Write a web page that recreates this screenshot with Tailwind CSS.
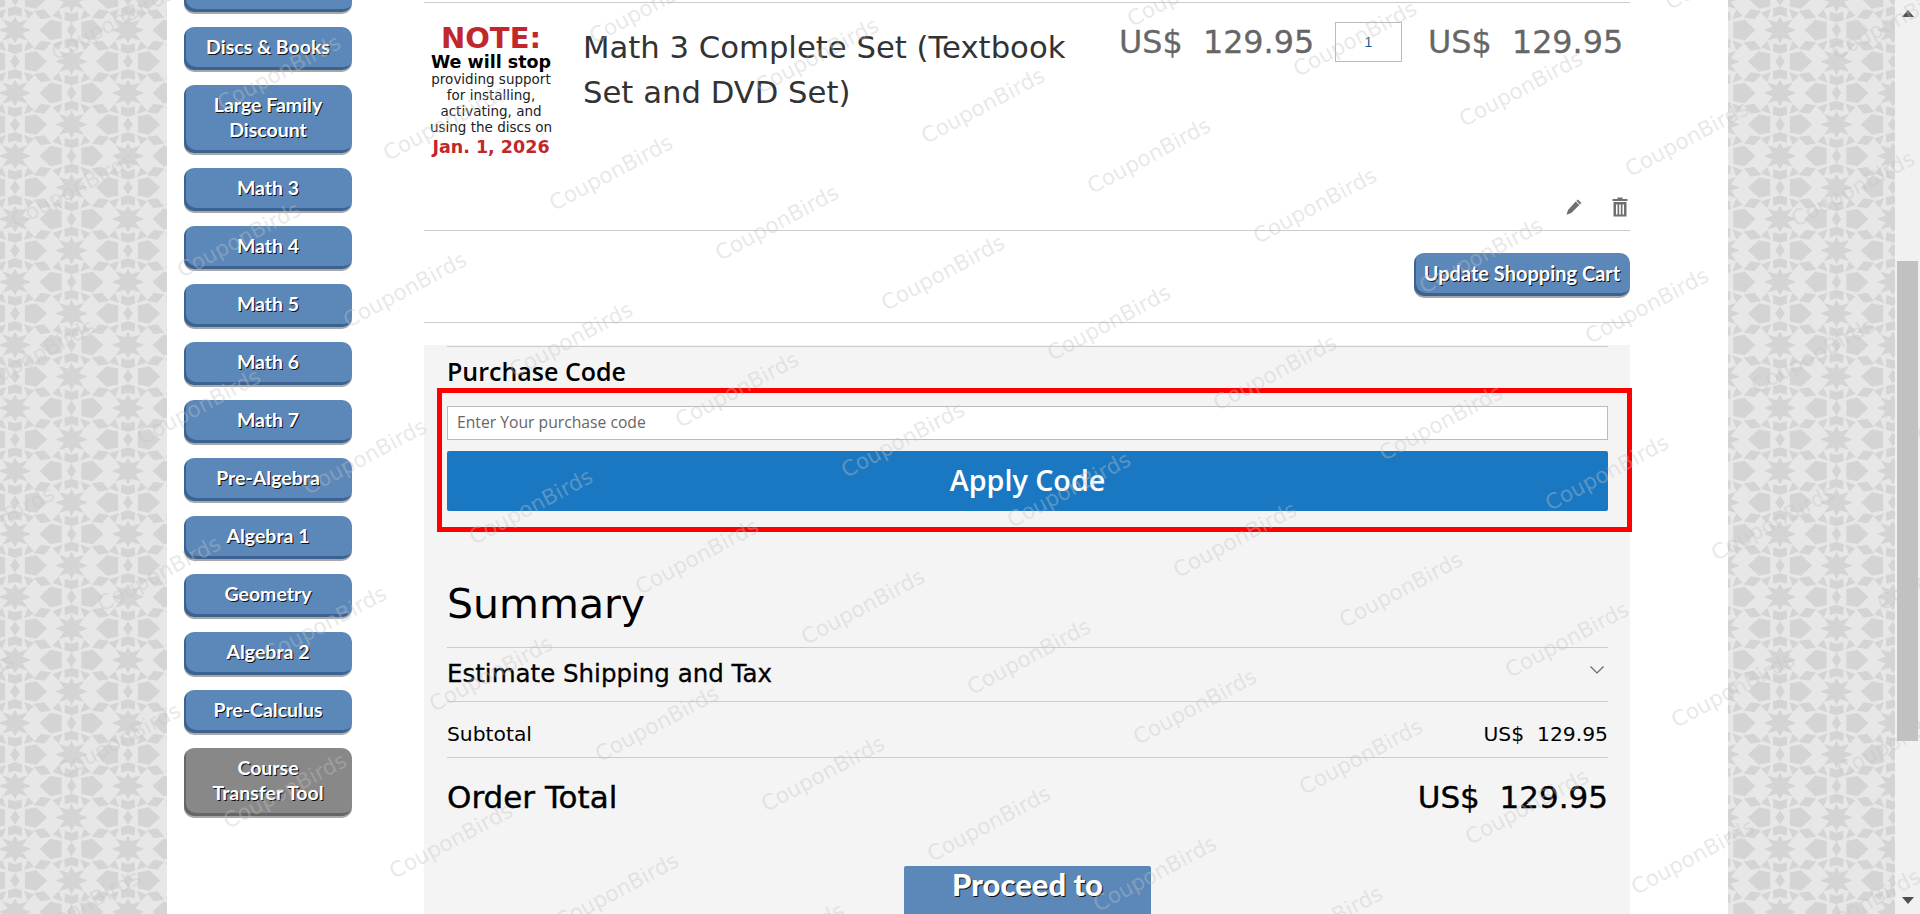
<!DOCTYPE html>
<html lang="en">
<head>
<meta charset="utf-8">
<title>Shopping Cart</title>
<script src="https://cdn.jsdelivr.net/npm/@tailwindcss/browser@4"></script>
</head>
<body class="m-0 overflow-hidden bg-white">
<div class="relative flex h-[914px] w-[1920px] overflow-hidden font-['DejaVu_Sans',sans-serif]">

  <!-- left gutter -->
  <div class="h-full w-[167px] flex-none">
    <svg width="167" height="914" class="block">
      <defs>
        <g id="h" fill="#d4d4d4" stroke="#d4d4d4" stroke-width="1.2">
          <path d="M0,0 L15,0 L6.5,3 L11,9.5 L3,7 L0,12 Z"/>
          <path d="M0,25.5 L4,31.5 H0 Z"/>
          <path d="M0,16 L6,14 L6.5,21 L0,23 Z"/>
          <path d="M10.5,31.5 L10.5,24 L21,22 L31,31.5 Z"/>
          <path d="M13,12 L18,17 L10,20 Z"/>
        </g>
        <g id="q">
          <use href="#h"/>
          <use href="#h" transform="translate(56.5,31.5) scale(-1,-1)"/>
          <path fill="#d4d4d4" stroke="#d4d4d4" stroke-width="1.2" d="M20,18.5 L26,11.5 L35,13 L29,20 Z"/>
        </g>
        <g id="t">
          <use href="#q"/>
          <use href="#q" transform="translate(113,0) scale(-1,1)"/>
          <use href="#q" transform="translate(0,63) scale(1,-1)"/>
          <use href="#q" transform="translate(113,63) scale(-1,-1)"/>
        </g>
        <pattern id="pl" width="113" height="63" patternUnits="userSpaceOnUse" patternTransform="translate(15,30)"><rect width="113" height="63" fill="#e7e7e7"/><use href="#t"/></pattern>
        <pattern id="pr" width="113" height="63" patternUnits="userSpaceOnUse" patternTransform="translate(52,30)"><rect width="113" height="63" fill="#e7e7e7"/><use href="#t"/></pattern>
      </defs>
      <rect width="167" height="914" fill="url(#pl)"/>
    </svg>
  </div>

  <!-- page -->
  <div class="relative flex h-full w-[1561px] flex-none bg-white">
    <!-- sidebar -->
    <nav class="mt-[-31px] flex h-fit w-[257px] flex-none flex-col gap-[15px] pl-[17px] text-center text-[19.5px] leading-[25px] font-bold text-white font-['Lato',sans-serif] [text-shadow:1px_1px_0_#111111]">
      <a class="block h-[43px] w-[168px] rounded-[10px] bg-[#5b88b9] shadow-[inset_2px_-3px_0_#3c6291,0_2px_0_#a8a8a8]"></a>
      <a class="flex h-[43px] w-[168px] items-center justify-center rounded-[10px] bg-[#5b88b9] pb-[4px] shadow-[inset_2px_-3px_0_#3c6291,0_2px_0_#a8a8a8]">Discs &amp; Books</a>
      <a class="flex h-[68px] w-[168px] items-center justify-center rounded-[10px] bg-[#5b88b9] pb-[4px] shadow-[inset_2px_-3px_0_#3c6291,0_2px_0_#a8a8a8]">Large Family<br>Discount</a>
      <a class="flex h-[43px] w-[168px] items-center justify-center rounded-[10px] bg-[#5b88b9] pb-[4px] shadow-[inset_2px_-3px_0_#3c6291,0_2px_0_#a8a8a8]">Math 3</a>
      <a class="flex h-[43px] w-[168px] items-center justify-center rounded-[10px] bg-[#5b88b9] pb-[4px] shadow-[inset_2px_-3px_0_#3c6291,0_2px_0_#a8a8a8]">Math 4</a>
      <a class="flex h-[43px] w-[168px] items-center justify-center rounded-[10px] bg-[#5b88b9] pb-[4px] shadow-[inset_2px_-3px_0_#3c6291,0_2px_0_#a8a8a8]">Math 5</a>
      <a class="flex h-[43px] w-[168px] items-center justify-center rounded-[10px] bg-[#5b88b9] pb-[4px] shadow-[inset_2px_-3px_0_#3c6291,0_2px_0_#a8a8a8]">Math 6</a>
      <a class="flex h-[43px] w-[168px] items-center justify-center rounded-[10px] bg-[#5b88b9] pb-[4px] shadow-[inset_2px_-3px_0_#3c6291,0_2px_0_#a8a8a8]">Math 7</a>
      <a class="flex h-[43px] w-[168px] items-center justify-center rounded-[10px] bg-[#5b88b9] pb-[4px] shadow-[inset_2px_-3px_0_#3c6291,0_2px_0_#a8a8a8]">Pre-Algebra</a>
      <a class="flex h-[43px] w-[168px] items-center justify-center rounded-[10px] bg-[#5b88b9] pb-[4px] shadow-[inset_2px_-3px_0_#3c6291,0_2px_0_#a8a8a8]">Algebra 1</a>
      <a class="flex h-[43px] w-[168px] items-center justify-center rounded-[10px] bg-[#5b88b9] pb-[4px] shadow-[inset_2px_-3px_0_#3c6291,0_2px_0_#a8a8a8]">Geometry</a>
      <a class="flex h-[43px] w-[168px] items-center justify-center rounded-[10px] bg-[#5b88b9] pb-[4px] shadow-[inset_2px_-3px_0_#3c6291,0_2px_0_#a8a8a8]">Algebra 2</a>
      <a class="flex h-[43px] w-[168px] items-center justify-center rounded-[10px] bg-[#5b88b9] pb-[4px] shadow-[inset_2px_-3px_0_#3c6291,0_2px_0_#a8a8a8]">Pre-Calculus</a>
      <a class="flex h-[68px] w-[168px] items-center justify-center rounded-[10px] bg-[#888888] pb-[4px] shadow-[inset_2px_-3px_0_#666666,0_2px_0_#a8a8a8]">Course<br>Transfer Tool</a>
    </nav>

    <!-- main column -->
    <main class="w-[1206px] flex-none pt-[2px]">
      <!-- cart item -->
      <div class="flex h-[229px] flex-col border-y border-[#cccccc]">
        <div class="flex flex-1">
          <div class="w-[134px] flex-none pt-[20px] text-center text-[13.5px] leading-[16px] text-[#222222]">
            <div class="text-[29px] leading-[30px] font-bold text-[#c1272d]">NOTE:</div>
            <div class="text-[17.5px] leading-[18px] font-bold text-black">We will stop</div>
            providing support<br>for installing,<br>activating, and<br>using the discs on
            <div class="mt-[3px] text-[17.5px] leading-[18px] font-bold text-[#c1272d]">Jan. 1, 2026</div>
          </div>
          <div class="w-[561px] flex-none pt-[22px] pl-[25px] text-[30.7px] leading-[45px] text-[#333333]">Math 3 Complete Set (Textbook Set and DVD Set)</div>
          <div class="w-[216px] flex-none pt-[21px] text-[31.8px] leading-[36px] whitespace-pre text-[#666666] [-webkit-text-stroke:0.3px_#666666]">US$  129.95</div>
          <div class="w-[93px] flex-none pt-[19px]"><div class="flex h-[40px] w-[67px] items-center justify-center border border-[#bbbbbb] bg-white text-[14px] text-[#1a5a8a] font-['Liberation_Sans',sans-serif]">1</div></div>
          <div class="flex-1 pt-[21px] text-[31.8px] leading-[36px] whitespace-pre text-[#666666] [-webkit-text-stroke:0.3px_#666666]">US$  129.95</div>
        </div>
        <div class="flex h-[42px] justify-end gap-[29px] pr-[2px] pb-[12px]">
          <svg width="18" height="18" viewBox="0 0 18 18" class="mt-[10px]" fill="#6f6f6f"><path d="M12.8 1.5 L16.4 5 L15 6.4 L11.4 2.9 Z"/><path d="M10.7 3.6 L14.3 7.1 L6.3 15 L1.5 16.7 L3 12 Z"/></svg>
          <svg width="16" height="20" viewBox="0 0 16 20" class="mt-[9px]" fill="#6f6f6f"><path d="M5.5 0.5 H10.5 V2 H15.5 V4 H0.5 V2 H5.5 Z"/><path fill-rule="evenodd" d="M1.5 5 H14.5 V19.5 H1.5 Z M4 7.5 V17.5 H5.5 V7.5 Z M7.2 7.5 V17.5 H8.8 V7.5 Z M10.5 7.5 V17.5 H12 V7.5 Z"/></svg>
        </div>
      </div>

      <!-- update row -->
      <div class="flex h-[92px] items-start justify-end border-b border-[#cccccc] pt-[22px]">
        <a class="flex h-[43px] w-[216px] items-center justify-center rounded-[10px] bg-[#5b88b9] pb-[3px] text-[20px] font-bold text-white font-['Lato',sans-serif] shadow-[inset_2px_-3px_0_#3c6291,0_2px_0_#a8a8a8] [text-shadow:1px_1px_0_#111111]">Update Shopping Cart</a>
      </div>

      <!-- summary box -->
      <section class="mt-[22px] h-[600px] bg-[#f4f4f4] pt-[1px] pr-[22px] pl-[23px] text-black">
        <div class="border-t border-[#cccccc] pt-[9px] text-[25px] leading-[30px] font-semibold font-['Open_Sans',sans-serif]">Purchase Code</div>
        <div class="mt-[20px] flex h-[34px] items-center border border-[#bbbbbb] bg-white pl-[9px] text-[15.7px] text-[#666666] font-['Open_Sans',sans-serif]">Enter Your purchase code</div>
        <div class="mt-[11px] flex h-[60px] items-center justify-center rounded-[2px] bg-[#1a78c2] pb-[3px] text-[28.7px] font-semibold text-white font-['Open_Sans',sans-serif]">Apply Code</div>

        <h2 class="mt-[68px] text-[41px] leading-[50px]">Summary</h2>
        <div class="mt-[18px] flex h-[55px] items-center justify-between border-y border-[#cccccc] text-[24.5px] [-webkit-text-stroke:0.3px_#000000]">
          <span>Estimate Shipping and Tax</span>
          <svg width="16" height="10" viewBox="0 0 16 10" class="mr-[3px] mb-[10px]" fill="none" stroke="#666666" stroke-width="1.2"><path d="M1.5 1.5 L8 8 L14.5 1.5"/></svg>
        </div>
        <div class="flex h-[56px] items-center justify-between border-b border-[#cccccc] pt-[10px] text-[20.3px]">
          <span>Subtotal</span><span class="whitespace-pre">US$  129.95</span>
        </div>
        <div class="flex h-[79px] items-center justify-between text-[31px] [-webkit-text-stroke:0.4px_#000000]">
          <span>Order Total</span><span class="whitespace-pre">US$  129.95</span>
        </div>
        <div class="mx-auto mt-[29px] flex h-[80px] w-[247px] justify-center rounded-[2px] bg-[#5b88b9] text-[31px] leading-[36px] font-black text-white font-['Lato',sans-serif] [text-shadow:1px_1px_0_#111111]">Proceed to</div>
      </section>
    </main>

    <!-- red annotation -->
    <div class="absolute top-[388px] left-[270px] h-[144px] w-[1195px] border-[5px] border-[#ff0000]"></div>
  </div>

  <!-- right gutter -->
  <div class="h-full w-[167px] flex-none">
    <svg width="167" height="914" class="block"><rect width="167" height="914" fill="url(#pr)"/></svg>
  </div>

  <!-- scrollbar -->
  <div class="flex h-full w-[25px] flex-none flex-col items-center bg-[#f1f1f1]">
    <svg width="12" height="7" viewBox="0 0 12 7" class="mt-[10px]" fill="#505050"><path d="M6 0 L12 7 H0 Z"/></svg>
    <div class="mt-[244px] h-[480px] w-[21px] bg-[#c1c1c1]"></div>
    <svg width="12" height="7" viewBox="0 0 12 7" class="mt-[156px]" fill="#505050"><path d="M0 0 H12 L6 7 Z"/></svg>
  </div>

  <!-- CouponBirds watermark overlay -->
  <svg id="wm" width="1920" height="914" class="pointer-events-none absolute top-0 left-0 font-['DejaVu_Sans',sans-serif]" fill="#c4c4c4" fill-opacity="0.38" font-size="21.5"></svg>
</div>
<script>
  var wm = document.getElementById('wm');
  for (var a = -14; a <= 14; a++) {
    for (var b = -8; b <= 8; b++) {
      var x = 1401 + a * 166 + b * 40, y = 590 + a * 50 - b * 167;
      if (x < -70 || x > 1990 || y < -50 || y > 960) continue;
      var t = document.createElementNS('http://www.w3.org/2000/svg', 'text');
      t.setAttribute('text-anchor', 'middle');
      t.setAttribute('transform', 'translate(' + x + ',' + y + ') rotate(-28)');
      t.setAttribute('y', '7');
      t.textContent = 'CouponBirds';
      wm.appendChild(t);
    }
  }
</script>
</body>
</html>
